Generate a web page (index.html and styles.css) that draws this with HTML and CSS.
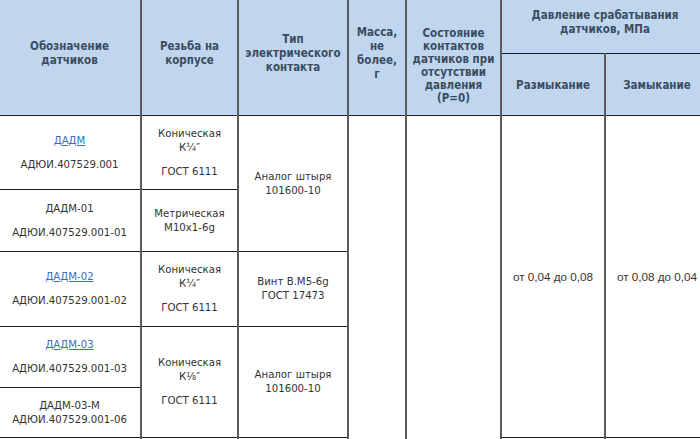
FILE: index.html
```html
<!DOCTYPE html>
<html lang="ru">
<head>
<meta charset="utf-8">
<link rel="stylesheet" href="styles.css">
</head>
<body>
<table class="spec">
  <colgroup>
    <col class="c1"><col class="c2"><col class="c3"><col class="c4"><col class="c5"><col class="c6"><col class="c7">
  </colgroup>
  <thead>
    <tr class="h1">
      <th rowspan="2">Обозначение<br>датчиков</th>
      <th rowspan="2">Резьба на<br>корпусе</th>
      <th rowspan="2">Тип<br>электрического<br>контакта</th>
      <th rowspan="2">Масса,<br>не<br>более,<br>г</th>
      <th rowspan="2" class="state">Состояние<br>контактов<br>датчиков при<br>отсутствии<br>давления<br>(P=0)</th>
      <th colspan="2">Давление срабатывания<br>датчиков, МПа</th>
    </tr>
    <tr class="h2">
      <th>Размыкание</th>
      <th>Замыкание</th>
    </tr>
  </thead>
  <tbody>
    <tr class="b1">
      <td><p><a href="#">ДАДМ</a></p><p>АДЮИ.407529.001</p></td>
      <td><p>Коническая<br>К¼″</p><p>ГОСТ 6111</p></td>
      <td rowspan="2">Аналог штыря<br>101600-10</td>
      <td rowspan="6"></td>
      <td rowspan="6"></td>
      <td rowspan="5" class="num">от 0,04 до 0,08</td>
      <td rowspan="5" class="num">от 0,08 до 0,04</td>
    </tr>
    <tr class="b2">
      <td><p>ДАДМ-01</p><p>АДЮИ.407529.001-01</p></td>
      <td>Метрическая<br>M10x1-6g</td>
    </tr>
    <tr class="b3">
      <td><p><a href="#">ДАДМ-02</a></p><p>АДЮИ.407529.001-02</p></td>
      <td><p>Коническая<br>К¼″</p><p>ГОСТ 6111</p></td>
      <td>Винт В.М5-6g<br>ГОСТ 17473</td>
    </tr>
    <tr class="b4">
      <td><p><a href="#">ДАДМ-03</a></p><p>АДЮИ.407529.001-03</p></td>
      <td rowspan="2"><p>Коническая<br>К⅛″</p><p>ГОСТ 6111</p></td>
      <td rowspan="2">Аналог штыря<br>101600-10</td>
    </tr>
    <tr class="b5">
      <td>ДАДМ-03-М<br>АДЮИ.407529.001-06</td>
    </tr>
    <tr class="b6">
      <td></td><td></td><td></td><td></td><td></td>
    </tr>
  </tbody>
</table>
</body>
</html>
```

FILE: styles.css
```css
html, body {
  margin: 0;
  padding: 0;
  background: #ffffff;
  overflow: hidden;
}

.spec {
  border-collapse: collapse;
  table-layout: fixed;
  width: 711px;
  margin: -10px 0 0 -3px;
  font-family: "DejaVu Sans Condensed", "DejaVu Sans", sans-serif;
  font-size: 11.3px;
  line-height: 14px;
  color: #333333;
}

.c1 { width: 143px; }
.c2 { width: 97px; }
.c3 { width: 110px; }
.c4 { width: 58px; }
.c5 { width: 95px; }
.c6 { width: 104px; }
.c7 { width: 104px; }

.spec th,
.spec td {
  border-top: 1px solid #1e1e1e;
  border-bottom: 1px solid #1e1e1e;
  border-left: 2px solid #5c5c5c;
  border-right: 2px solid #5c5c5c;
  padding: 0 3px;
  text-align: center;
  vertical-align: middle;
}

.spec th {
  background: #bfd6ee;
  color: #3b4c60;
  font-weight: bold;
  font-size: 11.5px;
}

.spec th.state {
  padding-top: 26px;
  line-height: 13px;
}

.h1 { height: 63px; }
.h2 { height: 62px; }
.b1 { height: 74px; }
.b2 { height: 62px; }
.b3 { height: 75px; }
.b4 { height: 61px; }
.b5 { height: 50px; }
.b6 { height: 30px; }

.spec p {
  margin: 0;
}

.spec p + p {
  margin-top: 10px;
}

.spec a {
  color: #3a6cc6;
  text-decoration: underline;
}

.num {
  font-family: "Liberation Sans", Arial, sans-serif;
  font-size: 11.7px;
}
```
